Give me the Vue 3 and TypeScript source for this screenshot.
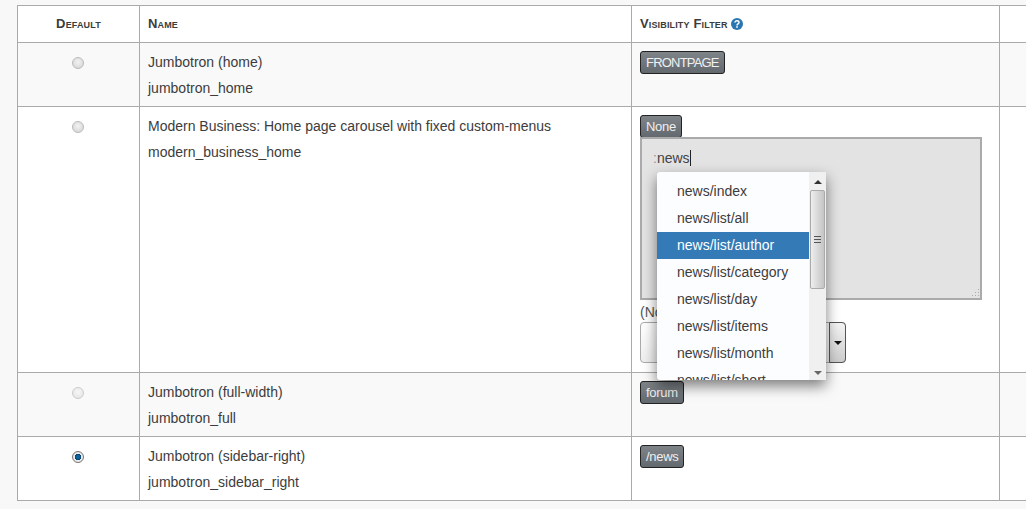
<script setup lang="ts">
const suggestions = [
  'news/index',
  'news/list/all',
  'news/list/author',
  'news/list/category',
  'news/list/day',
  'news/list/items',
  'news/list/month',
  'news/list/short'
]
</script>

<template>
  <div class="page">
    <table class="layouts">
      <colgroup>
        <col class="col-default" />
        <col class="col-name" />
        <col class="col-filter" />
        <col />
      </colgroup>
      <thead>
        <tr>
          <th class="center">Default</th>
          <th>Name</th>
          <th>
            Visibility Filter
            <svg class="help" viewBox="0 0 12 12" width="12" height="12">
              <circle cx="6" cy="6" r="6" fill="#2a76b0" />
              <path d="M4 4.6C4 3.4 4.9 2.8 6 2.8s2 .7 2 1.7c0 1.5-2 1.4-2 3" fill="none" stroke="#fff" stroke-width="1.5" />
              <rect x="5.2" y="8.2" width="1.6" height="1.6" fill="#fff" />
            </svg>
          </th>
          <th></th>
        </tr>
      </thead>
      <tbody>
        <tr class="odd">
          <td class="center"><span class="radio"></span></td>
          <td><p>Jumbotron (home)</p><p>jumbotron_home</p></td>
          <td class="filter-cell"><span class="badge caps">FRONTPAGE</span></td>
          <td></td>
        </tr>
        <tr>
          <td class="center"><span class="radio"></span></td>
          <td>
            <p>Modern Business: Home page carousel with fixed custom-menus</p>
            <p>modern_business_home</p>
          </td>
          <td class="filter-cell">
            <div class="filter">
              <span class="badge">None</span>
              <div class="textarea">
                <span class="colon">:</span>news<span class="caret"></span>
                <svg class="grip" viewBox="0 0 10 10" width="10" height="10">
                  <path d="M8 1h1v1H8zM5 4h1v1H5zM8 4h1v1H8zM2 7h1v1H2zM5 7h1v1H5zM8 7h1v1H8z" fill="#aaa" />
                </svg>
              </div>
              <div class="note">(None selected)</div>
              <div class="select"><span class="select-arrow"></span></div>
              <div class="dropdown">
                <ul class="items">
                  <li v-for="s in suggestions" :key="s" :class="{ active: s === 'news/list/author' }">{{ s }}</li>
                </ul>
                <div class="scrollbar">
                  <span class="arrow up"></span>
                  <div class="thumb"><span class="grip-lines"></span></div>
                  <span class="arrow down"></span>
                </div>
              </div>
            </div>
          </td>
          <td></td>
        </tr>
        <tr class="odd">
          <td class="center"><span class="radio faded"></span></td>
          <td><p>Jumbotron (full-width)</p><p>jumbotron_full</p></td>
          <td class="filter-cell"><span class="badge">forum</span></td>
          <td></td>
        </tr>
        <tr>
          <td class="center"><span class="radio checked"></span></td>
          <td><p>Jumbotron (sidebar-right)</p><p>jumbotron_sidebar_right</p></td>
          <td class="filter-cell"><span class="badge">/news</span></td>
          <td></td>
        </tr>
      </tbody>
    </table>
  </div>
</template>

<style>
html,
body {
  margin: 0;
  background: #f8f8f8;
}
</style>

<style scoped>
.page {
  width: 1026px;
  height: 509px;
  overflow: hidden;
  padding: 5px 0 0 17px;
  box-sizing: border-box;
  font-family: "Liberation Sans", Arial, sans-serif;
  font-size: 14px;
  color: #3c3c3c;
}

.layouts {
  width: 1060px;
  table-layout: fixed;
  border-collapse: collapse;
  background: #fff;
}

.col-default {
  width: 122px;
}

.col-name {
  width: 492px;
}

.col-filter {
  width: 368px;
}

th,
td {
  border: 1px solid #aaa;
  text-align: left;
  vertical-align: top;
  line-height: 20px;
}

td {
  padding: 9px 8px 8px;
}

th {
  height: 20px;
  padding: 8px;
  font-variant: small-caps;
  font-size: 13px;
  font-weight: 700;
  letter-spacing: 0.15px;
}

th.center,
td.center {
  text-align: center;
}

td.center {
  padding-left: 7px;
  padding-right: 9px;
}

td.filter-cell {
  padding-top: 8px;
}

.odd td {
  background: #f9f9f9;
}

p {
  margin: 0 0 6px;
}

p:last-child {
  margin-bottom: 0;
}

.help {
  vertical-align: -2px;
}

.radio {
  display: block;
  width: 12px;
  height: 12px;
  margin: 5px auto 0;
  box-sizing: border-box;
  border: 1px solid #bbb;
  border-radius: 50%;
  background: radial-gradient(circle at 50% 40%, #f2f2f2, #d2d2d2);
}

.radio.faded {
  border-color: #ccc;
  background: radial-gradient(circle at 50% 40%, #f6f6f6, #e2e2e2);
}

.radio.checked {
  border-color: #777;
  background: radial-gradient(circle, #0a6ca8 0, #0a5c94 2px, #093f66 3px, #eee 3.5px, #ddd 6px);
}

.badge {
  display: inline-block;
  box-sizing: border-box;
  height: 23px;
  padding: 0 5px;
  line-height: 21px;
  border: 1px solid #222;
  border-radius: 3px;
  background: linear-gradient(#7f8488, #62696f);
  color: #f0f0f0;
  font-size: 13px;
  letter-spacing: -0.3px;
}

.badge.caps {
  letter-spacing: -0.8px;
}

.filter {
  position: relative;
  padding-bottom: 1px;
}

.filter .badge {
  display: block;
  width: fit-content;
}

.textarea {
  position: relative;
  box-sizing: border-box;
  width: 342px;
  height: 163px;
  margin-top: -1px;
  padding: 9px 11px;
  border: 2px solid #aaa;
  background: #e3e3e3;
  color: #444;
  line-height: 20px;
}

.colon {
  color: #999;
}

.caret {
  display: inline-block;
  width: 1px;
  height: 16px;
  background: #222;
  vertical-align: -3px;
}

.grip {
  position: absolute;
  right: 0;
  bottom: 0;
}

.note {
  margin-top: 2px;
  line-height: 20px;
  color: #555;
}

.select {
  display: flex;
  justify-content: flex-end;
  box-sizing: border-box;
  width: 206px;
  height: 41px;
  border: 1px solid #aaa;
  border-radius: 4px;
  background: linear-gradient(#fff, #eee);
}

.select-arrow {
  position: relative;
  width: 17px;
  margin: -1px;
  box-sizing: border-box;
  border: 1px solid #555;
  border-radius: 0 4px 4px 0;
  background: linear-gradient(#f4f4f4, #ccc);
}

.select-arrow::after {
  content: "";
  position: absolute;
  left: 4px;
  top: 18px;
  border: 4px solid transparent;
  border-top: 4px solid #111;
  border-bottom: 0;
}

.dropdown {
  position: absolute;
  left: 17px;
  top: 57px;
  display: flex;
  width: 169px;
  height: 208px;
  border-radius: 3px 0 0 3px;
  background: #fcfdff;
  box-shadow: 0 6px 14px rgba(0, 0, 0, 0.5);
  overflow: hidden;
}

.items {
  flex: 1;
  margin: 0;
  padding: 6px 0 0;
  list-style: none;
  overflow: hidden;
}

.items li {
  height: 27px;
  padding-left: 20px;
  line-height: 26px;
}

.items li.active {
  background: #337ab7;
  color: #fff;
}

.scrollbar {
  display: flex;
  flex-direction: column;
  align-items: center;
  width: 17px;
  background: #f0f0f0;
}

.arrow {
  flex: none;
  width: 0;
  height: 0;
  border: 4px solid transparent;
}

.arrow.up {
  margin-top: 8px;
  border-top: 0;
  border-bottom: 4px solid #333;
}

.arrow.down {
  margin-top: auto;
  margin-bottom: 5px;
  border-bottom: 0;
  border-top: 4px solid #666;
}

.thumb {
  flex: none;
  display: flex;
  align-items: center;
  justify-content: center;
  box-sizing: border-box;
  width: 15px;
  height: 99px;
  margin-top: 6px;
  border: 1px solid #aaa;
  border-radius: 2px;
  background: linear-gradient(90deg, #eee, #ddd 40%, #c4c4c4);
}

.grip-lines {
  width: 7px;
  height: 7px;
  background: repeating-linear-gradient(#555 0 1px, transparent 1px 3px);
}
</style>
